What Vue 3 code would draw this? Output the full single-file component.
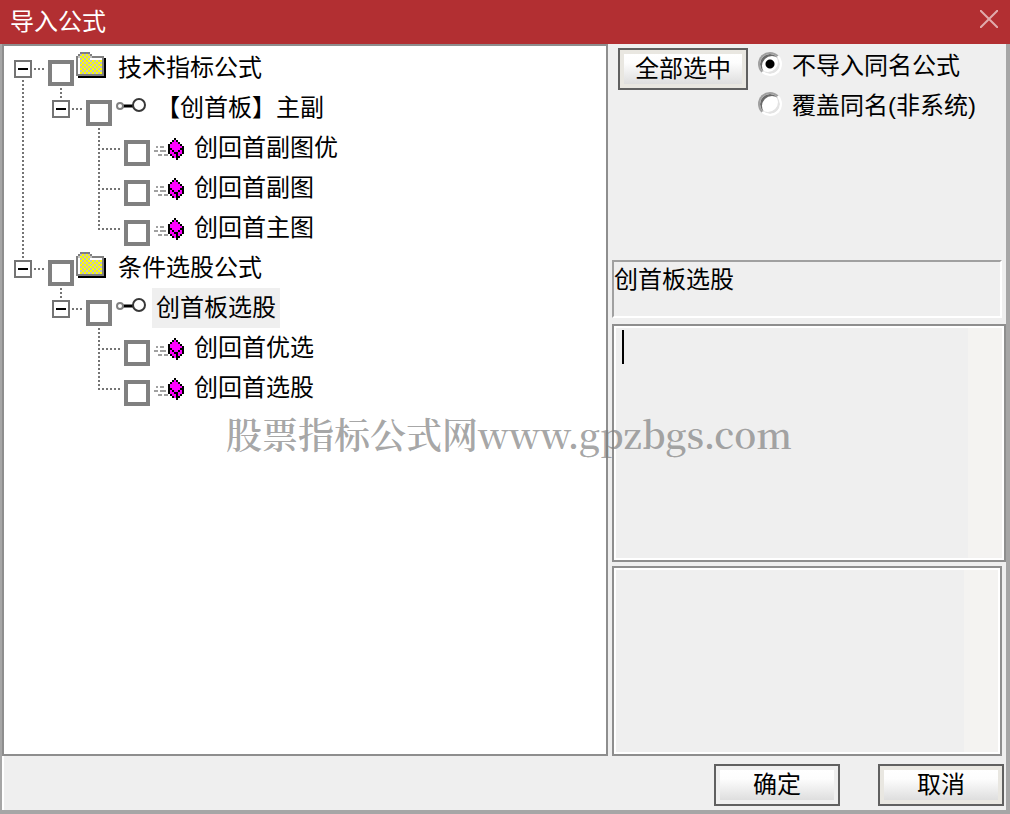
<script setup>
import { ref } from 'vue'

const palette = {
  G: '#808080', K: '#000000', W: '#ffffff', Y: '#ffff00', S: '#c0c0c0', M: '#ff00ff', L: '#a0a0a0',
}

const maps = {
  folder: [
    '..GGGGG........',
    '.GSYSYSG.......',
    'GSYSYSYSGGGGGG.',
    'GWSYSYSWWWWWWGK',
    'GWYSYSYSYSYSYGK',
    'GWSYSYSYSYSYSGK',
    'GWYSYSYSYSYSYGK',
    'GWSYSYSYSYSYSGK',
    'GWYSYSYSYSYSYGK',
    'GWSYSYSYSYSYSGK',
    'GWYSYSYSYSYSYGK',
    'GGGGGGGGGGGGGGK',
    '.KKKKKKKKKKKKKK',
  ],
  gem: [
    '..........K....',
    '.........KMK...',
    '........KMMMK..',
    '.......KMMMMMK.',
    '.L.LL..KMMMMMMK',
    '.......KKMMMMKK',
    'LL.LLL.KMKMMKMK',
    '.......KMMKKMMK',
    '..LL.LL.KMMKMK.',
    '.........KMKK..',
    '...........K...',
  ],
}

const pixels = (name) => {
  const out = []
  maps[name].forEach((line, y) => {
    for (let x = 0; x < line.length; x++) {
      if (line[x] !== '.') out.push({ x: x * 2, y: y * 2, fill: palette[line[x]] })
    }
  })
  return out
}

const icons = {
  folder: { height: 26, cells: pixels('folder') },
  gem: { height: 22, cells: pixels('gem') },
}

const rows = ref([
  { text: '技术指标公式', icon: 'folder', cells: ['open-down'] },
  { text: '【创首板】主副', icon: 'key', cells: ['line', 'open-up'] },
  { text: '创回首副图优', icon: 'gem', cells: ['line', 'blank', 'tee'] },
  { text: '创回首副图', icon: 'gem', cells: ['line', 'blank', 'tee'] },
  { text: '创回首主图', icon: 'gem', cells: ['line', 'blank', 'end'] },
  { text: '条件选股公式', icon: 'folder', cells: ['open-up'] },
  { text: '创首板选股', icon: 'key', cells: ['blank', 'open-up'], selected: true },
  { text: '创回首优选', icon: 'gem', cells: ['blank', 'blank', 'tee'] },
  { text: '创回首选股', icon: 'gem', cells: ['blank', 'blank', 'end'] },
].map((r) => ({ ...r, checked: false })))

const guides = {
  blank: '',
  line: 'M19 0V40',
  tee: 'M19 0V40M22 21H40',
  end: 'M19 0V22M22 21H40',
  'open-up': 'M19 0V10M30 21H40',
  'open-down': 'M19 32V40M30 21H40',
}

const mode = ref('skip')
</script>

<template>
  <div class="dialog">
    <header class="titlebar">
      <h1>导入公式</h1>
      <button class="close" type="button" aria-label="关闭">
        <svg width="18" height="18" viewBox="0 0 18 18"><path d="M0 0L18 18M18 0L0 18" /></svg>
      </button>
    </header>

    <div class="frame">
      <main class="content">
        <ul class="tree">
          <li v-for="(row, i) in rows" :key="i" class="row">
            <span v-for="(cell, c) in row.cells" :key="c" class="cell">
              <svg class="guide" width="38" height="40" viewBox="0 0 38 40"><path :d="guides[cell]" /></svg>
              <button v-if="cell.startsWith('open')" class="expander" type="button" :aria-label="'折叠 ' + row.text"></button>
            </span>
            <input :id="'node' + i" v-model="row.checked" class="check" type="checkbox">
            <span class="icon" :class="row.icon">
              <svg v-if="row.icon === 'key'" width="32" height="14" viewBox="0 0 32 14" fill="none">
                <path d="M7 8H17" stroke="#000" stroke-width="3" />
                <circle cx="4" cy="8" r="3" stroke="#808080" stroke-width="2" />
                <circle cx="23" cy="7" r="6" stroke="#383838" stroke-width="2" />
              </svg>
              <svg v-else width="30" :height="icons[row.icon].height" shape-rendering="crispEdges">
                <rect v-for="(p, k) in icons[row.icon].cells" :key="k" :x="p.x" :y="p.y" width="2" height="2" :fill="p.fill" />
              </svg>
            </span>
            <label :for="'node' + i" class="label" :class="{ selected: row.selected }">{{ row.text }}</label>
          </li>
        </ul>

        <section class="side">
          <div class="options">
            <button class="btn all" type="button">全部选中</button>
            <div class="radios">
              <label><input v-model="mode" type="radio" name="mode" value="skip">不导入同名公式</label>
              <label><input v-model="mode" type="radio" name="mode" value="cover">覆盖同名(非系统)</label>
            </div>
          </div>
          <output class="name">创首板选股</output>
          <div class="memo first">
            <textarea aria-label="公式说明"></textarea>
            <span class="caret"></span>
          </div>
          <div class="memo second">
            <textarea aria-label="导入信息" readonly></textarea>
          </div>
        </section>
      </main>

      <footer class="actions">
        <button class="btn" type="button">确定</button>
        <button class="btn warm" type="button">取消</button>
      </footer>
    </div>

    <div class="watermark">股票指标公式网www.gpzbgs.com</div>
  </div>
</template>

<style>
body {
  margin: 0;
}
</style>

<style scoped>
.dialog,
.dialog * {
  box-sizing: border-box;
}
.dialog {
  position: relative;
  display: flex;
  flex-direction: column;
  min-height: 100vh;
  background: #efefef;
  color: #000;
  font: 24px/40px "Liberation Sans", "Noto Sans CJK SC", sans-serif;
}
button,
input,
textarea {
  margin: 0;
  padding: 0;
  font: inherit;
  color: inherit;
}
.titlebar {
  display: flex;
  align-items: center;
  justify-content: space-between;
  height: 44px;
  padding: 0 12px 0 10px;
  background: #b22f32;
  color: #fff;
}
h1 {
  margin: 0;
  font-size: 24px;
  font-weight: 400;
}
.close {
  display: flex;
  padding-bottom: 6px;
  border: 0;
  background: none;
}
.close path {
  fill: none;
  stroke: #e0abac;
  stroke-width: 2;
}
.frame {
  flex: 1;
  display: flex;
  flex-direction: column;
  border: solid #a6a6a6;
  border-width: 0 4px 4px 2px;
}
.content {
  flex: 1;
  display: grid;
  grid-template-columns: 606fr 398fr;
}
.tree {
  margin: 0;
  padding: 2px 0;
  list-style: none;
  background: #fff;
  border: 2px solid #8e8e8e;
}
.row {
  display: flex;
  height: 40px;
}
.cell {
  display: flex;
  position: relative;
  width: 38px;
}
.guide {
  overflow: visible;
}
.guide path {
  fill: none;
  stroke: #747474;
  stroke-width: 2;
  stroke-dasharray: 2 2;
  shape-rendering: crispEdges;
}
.expander {
  position: absolute;
  left: 10px;
  top: 12px;
  width: 18px;
  height: 18px;
  border: 2px solid #747474;
  background: linear-gradient(#000, #000) center / 10px 2px no-repeat #fff;
}
.check {
  appearance: none;
  width: 26px;
  height: 26px;
  margin: 12px 2px 0 6px;
  border: 4px solid #808080;
  background: #fff;
}
.icon {
  display: flex;
  align-items: flex-start;
  width: 38px;
  padding-top: 4px;
}
.icon.key,
.icon.gem {
  padding: 10px 0 0 2px;
}
.label {
  padding: 0 4px;
}
.selected {
  background: #efefef;
}
.side {
  display: flex;
  flex-direction: column;
  padding-left: 4px;
}
.options {
  display: flex;
  align-items: flex-start;
  height: 216px;
  padding-left: 6px;
}
.btn {
  width: 126px;
  height: 42px;
  border: 2px solid #606060;
  background: linear-gradient(#fff, #fdfdfd 30%, #dedede) center / calc(100% - 8px) calc(100% - 8px) no-repeat #efefef;
  line-height: 38px;
}
.all {
  width: 130px;
  margin-top: 4px;
}
.warm,
.all {
  background-color: #e9e7e1;
}
.radios {
  display: flex;
  flex-direction: column;
  margin-left: 10px;
  padding-top: 2px;
}
.radios label {
  display: flex;
  align-items: center;
  gap: 10px;
  height: 40px;
  white-space: nowrap;
}
.radios input {
  appearance: none;
  width: 24px;
  height: 24px;
  margin-bottom: 4px;
  border: 2px solid;
  border-color: #a0a0a0 #fff #fff #a0a0a0;
  border-radius: 50%;
  background: #fff;
  box-shadow: inset 2px 2px #696969, inset -2px -2px #e3e3e3;
}
.radios input:checked {
  background: radial-gradient(circle, #000 4px, #fff 5px);
}
.name {
  height: 58px;
  margin-right: 4px;
  border: 2px solid;
  border-color: #a0a0a0 #fff #fff #a0a0a0;
  line-height: 36px;
}
.memo {
  position: relative;
  display: flex;
  border: 2px solid #8e8e8e;
}
.first {
  flex: 238;
  margin-top: 6px;
}
.second {
  flex: 190;
  margin: 4px 4px 0 0;
}
.memo textarea {
  flex: 1;
  width: 100%;
  padding: 2px 42px 2px 6px;
  border: 2px solid #fff;
  background: linear-gradient(#f4f3f1, #f4f3f1) right / 34px 100% no-repeat #efefef;
  resize: none;
  outline: 0;
}
.caret {
  position: absolute;
  left: 8px;
  top: 4px;
  width: 2px;
  height: 34px;
  background: #000;
}
.actions {
  display: flex;
  justify-content: flex-end;
  gap: 38px;
  height: 54px;
  padding: 8px 2px 0 0;
  border-left: 2px solid #fff;
}
.watermark {
  position: absolute;
  left: 0;
  right: 0;
  top: 410px;
  padding-left: 8px;
  text-align: center;
  font: 600 36px/48px "Noto Serif CJK SC", "Noto Sans CJK SC", serif;
  color: rgba(128, 128, 128, 0.7);
  pointer-events: none;
  white-space: nowrap;
}
</style>
